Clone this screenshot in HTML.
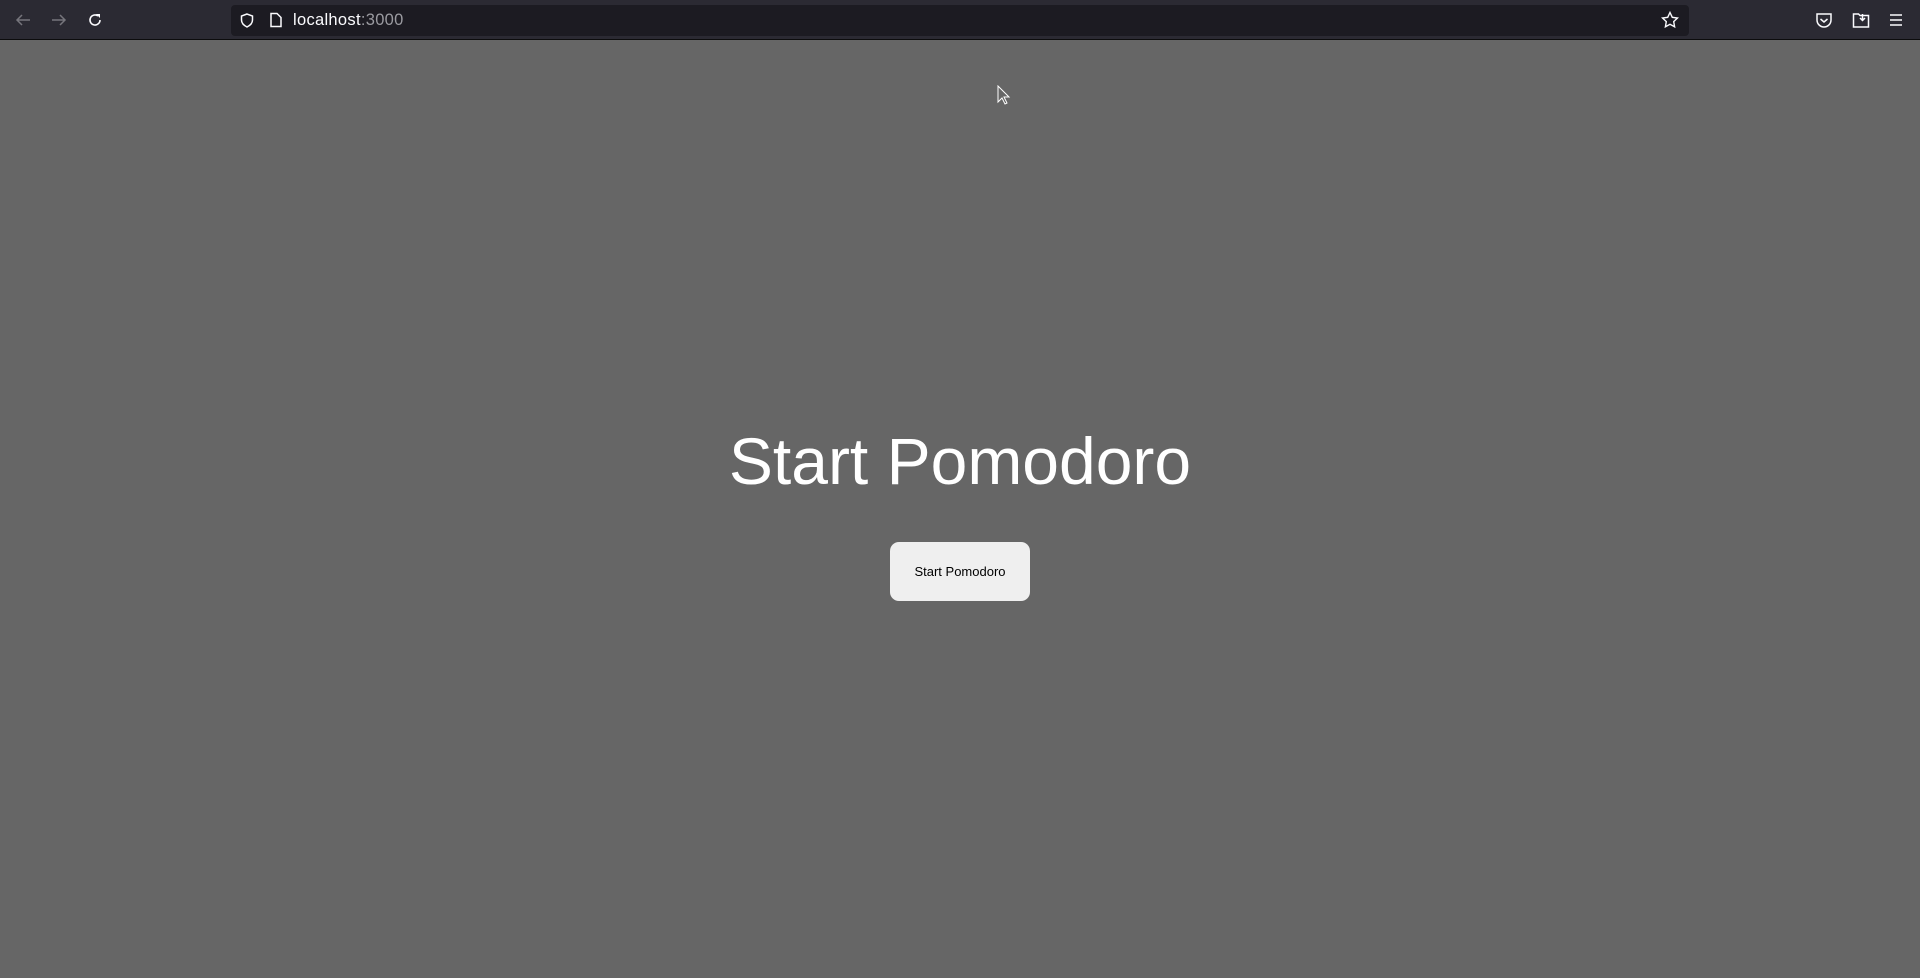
<!DOCTYPE html>
<html><head><style>
*{margin:0;padding:0;box-sizing:border-box}
body{width:1920px;height:978px;background:#666;font-family:"Liberation Sans",sans-serif;overflow:hidden;position:relative}
.bar{position:absolute;left:0;top:0;width:1920px;height:40px;background:#2b2a33;border-bottom:1px solid #0c0c0d}
.url{position:absolute;left:231px;top:5px;width:1458px;height:31px;background:#1c1b22;border-radius:4px}
.url span{position:absolute;left:62px;top:6px;font-size:16.5px;letter-spacing:0.3px;color:#fbfbfe}
.url span i{font-style:normal;color:#9a9aa0}
svg{position:absolute}
h1{position:absolute;left:0;width:1920px;top:421px;text-align:center;font-weight:normal;color:#fff;font-size:66px;line-height:80px}
.btn{position:absolute;left:890px;top:542px;width:140px;height:59px;background:#efefef;border-radius:9px;font-size:13px;color:#000;text-align:center;line-height:59px}
</style></head><body>
<div class="bar">
<svg style="left:14px;top:12px" width="18" height="16" viewBox="0 0 18 16"><path d="M16 8H3M8 3L3 8l5 5" stroke="#76757c" stroke-width="1.5" fill="none"/></svg>
<svg style="left:50px;top:12px" width="18" height="16" viewBox="0 0 18 16"><path d="M2 8h13M10 3l5 5-5 5" stroke="#76757c" stroke-width="1.5" fill="none"/></svg>
<svg style="left:87px;top:12px" width="16" height="16" viewBox="0 0 16 16"><path d="M13 8a5 5 0 1 1-2-4" stroke="#fbfbfe" stroke-width="1.6" fill="none"/><path d="M9 2h4v4z" fill="#fbfbfe"/></svg>
<div class="url">
<svg style="left:8px;top:7px" width="16" height="17" viewBox="0 0 16 17"><path d="M8 2L2.5 4v4c0 3.5 2.5 5.5 5.5 7 3-1.5 5.5-3.5 5.5-7V4z" stroke="#fbfbfe" stroke-width="1.5" fill="none"/></svg>
<svg style="left:38px;top:7px" width="14" height="16" viewBox="0 0 14 16"><path d="M2 1.5h6l4 4v9H2z" stroke="#fbfbfe" stroke-width="1.5" fill="none"/></svg>
<span>localhost<i>:3000</i></span>
<svg style="left:1430px;top:6px" width="18" height="18" viewBox="0 0 18 18"><path d="M9 1.5l2.3 4.8 5.2.7-3.8 3.6.9 5.2L9 13.3l-4.6 2.5.9-5.2L1.5 7l5.2-.7z" stroke="#fbfbfe" stroke-width="1.4" fill="none"/></svg>
</div>
<svg style="left:1815px;top:12px" width="18" height="17" viewBox="0 0 18 17"><path d="M2 2h14v6a7 7 0 0 1-14 0z" stroke="#fbfbfe" stroke-width="1.5" fill="none"/><path d="M5.5 7L9 10l3.5-3" stroke="#fbfbfe" stroke-width="1.5" fill="none"/></svg>
<svg style="left:1852px;top:11px" width="18" height="18" viewBox="0 0 18 18"><path d="M1.5 3h5l1.5 1.5h8.5V16h-15z" stroke="#fbfbfe" stroke-width="1.5" fill="none"/><path d="M10.5 3v6M8 7l2.5 2.5L13 7" stroke="#fbfbfe" stroke-width="1.5" fill="none"/></svg>
<svg style="left:1889px;top:13px" width="14" height="14" viewBox="0 0 14 14"><path d="M1 2h12M1 7h12M1 12h12" stroke="#fbfbfe" stroke-width="1.5"/></svg>
</div>
<svg style="left:997px;top:85px" width="14" height="22" viewBox="0 0 14 22"><path d="M1 1v16l4-4 3 6 2-1-3-6h5z" fill="#666" stroke="#fff" stroke-width="1"/></svg>
<h1>Start Pomodoro</h1>
<div class="btn">Start Pomodoro</div>
</body></html>
